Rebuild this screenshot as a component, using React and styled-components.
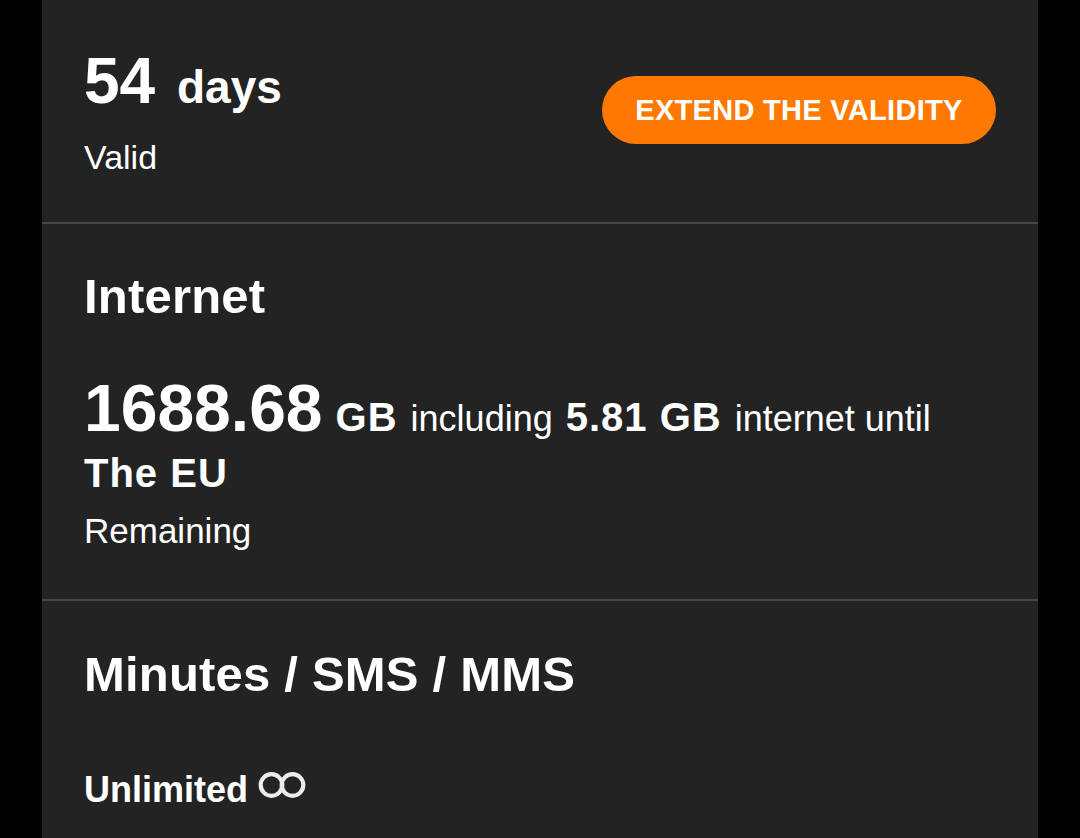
import styled, { createGlobalStyle } from 'styled-components'

const GlobalStyle = createGlobalStyle`
  html, body {
    margin: 0;
    padding: 0;
    background: #000;
  }
  body {
    font-family: "Liberation Sans", Arial, sans-serif;
    color: #fff;
  }
`

const Panel = styled.main`
  margin: 0 42px;
  min-height: 838px;
  background: #232323;
`

const Section = styled.section`
  padding: ${({ $top }) => $top}px 42px ${({ $bottom }) => $bottom}px 42px;
  border-bottom: ${({ $last }) => ($last ? 'none' : '2px solid #464646')};
`

const ValidityRow = styled.div`
  display: flex;
  align-items: center;
  justify-content: space-between;
`

const Hero = styled.div`
  font-size: 64px;
  line-height: 76px;
  font-weight: 700;
`

const HeroUnit = styled.span`
  font-size: 46px;
  line-height: 1;
  margin-left: 4px;
`

const Caption = styled.div`
  font-size: ${({ $size }) => $size || 34}px;
  line-height: 40px;
  margin-top: ${({ $gap }) => $gap}px;
`

const ExtendButton = styled.button`
  width: 394px;
  height: 68px;
  border: none;
  border-radius: 34px;
  background: #ff7900;
  color: #fff;
  font-family: inherit;
  font-size: 29px;
  font-weight: 700;
  letter-spacing: 0.3px;
  padding: 0;
  cursor: pointer;
`

const Title = styled.h2`
  margin: 0;
  font-size: 49px;
  line-height: 54px;
  font-weight: 700;
  letter-spacing: 0.2px;
`

const Amount = styled.p`
  margin: 58px 0 0;
  font-size: 36px;
  line-height: 54px;
  word-spacing: 3px;
`

const Big = styled.span`
  font-size: 66px;
  font-weight: 700;
`

const Strong = styled.span`
  font-size: 40px;
  font-weight: 700;
  letter-spacing: 1px;
  word-spacing: 0;
`

const Plain = styled.span`
  word-spacing: 0;
`

const Unlimited = styled.div`
  margin-top: 69px;
  font-size: 36px;
  line-height: 40px;
  font-weight: 700;
`

const InfinityIcon = styled.svg`
  margin-left: 0;
  vertical-align: 4px;
`

function Infinity() {
  return (
    <InfinityIcon width="48" height="26" viewBox="0 0 48 26" fill="none">
      <circle cx="13.5" cy="13" r="10.8" stroke="#ececec" strokeWidth="4.2" />
      <circle cx="34.5" cy="13" r="10.8" stroke="#ececec" strokeWidth="4.2" />
    </InfinityIcon>
  )
}

export default function App() {
  return (
    <>
      <GlobalStyle />
      <Panel>
        <Section $top={43} $bottom={45}>
          <ValidityRow>
            <div>
              <Hero>
                54 <HeroUnit>days</HeroUnit>
              </Hero>
              <Caption $gap={18}>Valid</Caption>
            </div>
            <ExtendButton>EXTEND THE VALIDITY</ExtendButton>
          </ValidityRow>
        </Section>

        <Section $top={45} $bottom={48}>
          <Title>Internet</Title>
          <Amount>
            <Big>1688.68</Big> <Strong>GB</Strong> including <Strong>5.81 GB</Strong> <Plain>internet until</Plain>
            <br />
            <Strong>The EU</Strong>
          </Amount>
          <Caption $size={35} $gap={9}>Remaining</Caption>
        </Section>

        <Section $top={46} $bottom={40} $last>
          <Title>Minutes / SMS / MMS</Title>
          <Unlimited>
            Unlimited <Infinity />
          </Unlimited>
        </Section>
      </Panel>
    </>
  )
}
